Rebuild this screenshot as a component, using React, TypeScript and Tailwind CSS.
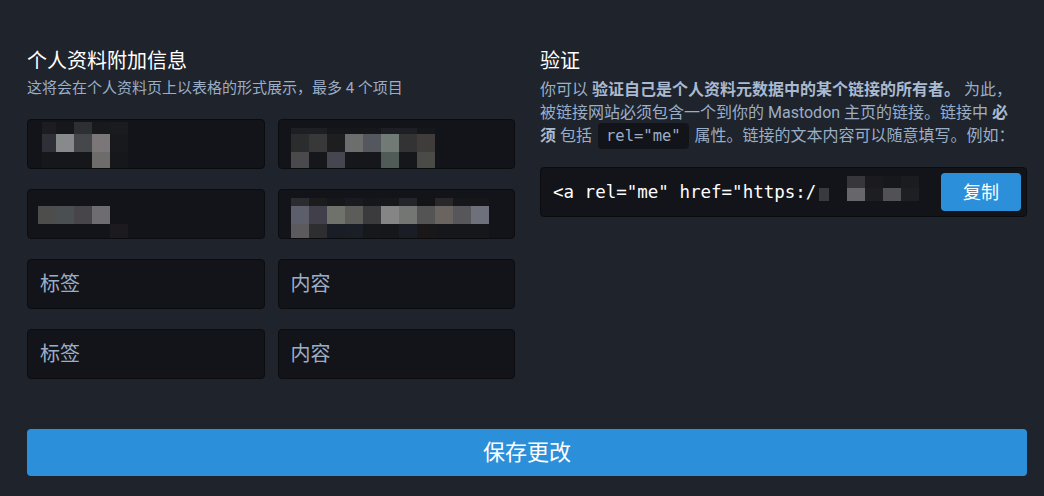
import React from "react";

type Mosaic = {
    left: number;
    top: number;
    cols: number[];
    rows: number[];
    colors: string[][];
};

const fields: { label?: string; value?: string; labelMosaic?: Mosaic; valueMosaic?: Mosaic }[] = [
    {
        labelMosaic: {
            left: 14,
            top: 2,
            cols: [14, 18, 18, 18, 18],
            rows: [12, 18, 17],
            colors: [
                ["#1c1c22", "#16171b", "#2e2f33", "#18191d", "#1a1b1f"],
                ["#2f2f37", "#868a8b", "#46474b", "#7b7779", "#18191d"],
                ["#16171b", "#16171b", "#16171b", "#6e6c6b", "#16171b"],
            ],
        },
        valueMosaic: {
            left: 12,
            top: 8,
            cols: [18, 18, 18, 18, 18, 18, 18, 18],
            rows: [6, 18, 17],
            colors: [
                ["#1e1f24", "#1e1f24", "#16171b", "#16171b", "#16171b", "#1e1f24", "#1e1f24", "#16171b"],
                ["#2b2c2e", "#383838", "#1e1e20", "#6b6e6c", "#55575e", "#717a74", "#333334", "#403c3b"],
                ["#4a4a4c", "#16171b", "#45464f", "#16171b", "#16171b", "#505a56", "#16171b", "#4a4b47"],
            ],
        },
    },
    {
        labelMosaic: {
            left: 10,
            top: 16,
            cols: [18, 18, 18, 18, 18],
            rows: [18, 18],
            colors: [
                ["#4d4e4c", "#4a4f51", "#48454a", "#6e6c70", "#131419"],
                ["#131419", "#131419", "#131419", "#131419", "#1c1a1e"],
            ],
        },
        valueMosaic: {
            left: 12,
            top: 8,
            cols: [18, 18, 18, 18, 18, 18, 18, 18, 18, 18, 18],
            rows: [8, 18, 17],
            colors: [
                ["#2b2c30", "#1c1c1c", "#16171b", "#181b20", "#16171b", "#17181c", "#24252a", "#131418", "#28272a", "#16171b", "#16171b"],
                ["#5c5e6b", "#413f49", "#6f716b", "#5c5d5b", "#3b3b3d", "#858585", "#737673", "#545454", "#6a6460", "#57565b", "#6e707b"],
                ["#5c5a5c", "#2e2d2f", "#191d26", "#1a1e26", "#17181c", "#16171b", "#1a1d25", "#1a1719", "#16171b", "#16171b", "#16171b"],
            ],
        },
    },
    { label: "标签", value: "内容" },
    { label: "标签", value: "内容" },
];

const codeMosaic: Mosaic = {
    left: 306,
    top: 8,
    cols: [18, 18, 18, 18],
    rows: [12, 13],
    colors: [
        ["#37373b", "#1b1b1f", "#17181c", "#1b1c20"],
        ["#67676b", "#1d1e22", "#525256", "#1e1f23"],
    ],
};

function Pixels({ m }: { m: Mosaic }) {
    // redacted content, drawn as a block mosaic over the field
    return (
        <div className="absolute flex flex-col" style={{ left: m.left, top: m.top }}>
            {m.rows.map((h, r) => (
                <div key={r} className="flex">
                    {m.cols.map((w, c) => (
                        <div key={c} style={{ width: w, height: h, background: m.colors[r][c] }} />
                    ))}
                </div>
            ))}
        </div>
    );
}

function Field({ placeholder, mosaic }: { placeholder?: string; mosaic?: Mosaic }) {
    return (
        <div className="relative h-[50px] overflow-hidden rounded-[4px] border border-[#0b0c0f] bg-[#131419]">
            {mosaic ? (
                <Pixels m={mosaic} />
            ) : (
                <input
                    placeholder={placeholder}
                    className="h-full w-full bg-transparent px-[12px] text-[20px] text-white outline-none placeholder:text-[#9baec8]"
                />
            )}
        </div>
    );
}

export default function App() {
    return (
        <div
            className="min-h-[496px] w-[1044px] bg-[#1f232b] pl-[27px] pr-[17px] pt-[47px]"
            style={{ fontFamily: 'Roboto, "Noto Sans CJK SC", sans-serif' }}
        >
            <div className="flex gap-[25px]">
                <div className="w-[488px] shrink-0">
                    <h4 className="text-[20px] leading-[28px] text-white">个人资料附加信息</h4>
                    <p className="mt-[3px] text-[15px] leading-[20px] text-[#9baec8]">
                        这将会在个人资料页上以表格的形式展示，最多 4 个项目
                    </p>
                    <div className="mt-[21px] grid grid-cols-2 gap-x-[13px] gap-y-[20px]">
                        {fields.map((f, i) => (
                            <React.Fragment key={i}>
                                <Field placeholder={f.label} mosaic={f.labelMosaic} />
                                <Field placeholder={f.value} mosaic={f.valueMosaic} />
                            </React.Fragment>
                        ))}
                    </div>
                </div>

                <div className="w-[487px] shrink-0">
                    <h4 className="text-[20px] leading-[28px] text-white">验证</h4>
                    <p className="mt-[3px] whitespace-nowrap text-[16px] leading-[23px] text-[#9baec8]">
                        你可以 <strong className="font-bold text-[#a9bad1]">验证自己是个人资料元数据中的某个链接的所有者。</strong> 为此，
                        <br />
                        被链接网站必须包含一个到你的 Mastodon 主页的链接。链接中 <strong className="font-bold text-[#a9bad1]">必</strong>
                        <br />
                        <strong className="font-bold text-[#a9bad1]">须</strong> 包括{" "}
                        <code
                            className="mx-[2px] rounded-[4px] bg-[#131419] px-[8px] py-[4px] text-[15.5px] text-[#9baec8]"
                            style={{ fontFamily: '"DejaVu Sans Mono", monospace' }}
                        >
                            rel="me"
                        </code>{" "}
                        属性。链接的文本内容可以随意填写。例如：
                    </p>

                    <div className="relative mt-[19px] flex h-[50px] items-center justify-between rounded-[4px] border border-[#0b0c0f] bg-[#131419] pl-[12px] pr-[5px]">
                        <span
                            className="text-[17.5px] text-white"
                            style={{ fontFamily: '"DejaVu Sans Mono", monospace' }}
                        >
                            &lt;a rel="me" href="https:/
                        </span>
                        <div className="absolute left-[278px] top-[20px] h-[13px] w-[10px] bg-[#3a3a3e]" />
                        <Pixels m={codeMosaic} />
                        <button className="h-[38px] w-[80px] rounded-[4px] bg-[#2b90d9] text-[18px] text-white">
                            复制
                        </button>
                    </div>
                </div>
            </div>

            <button className="mt-[50px] h-[47px] w-full rounded-[4px] bg-[#2b90d9] text-[22px] text-white">
                保存更改
            </button>
        </div>
    );
}
